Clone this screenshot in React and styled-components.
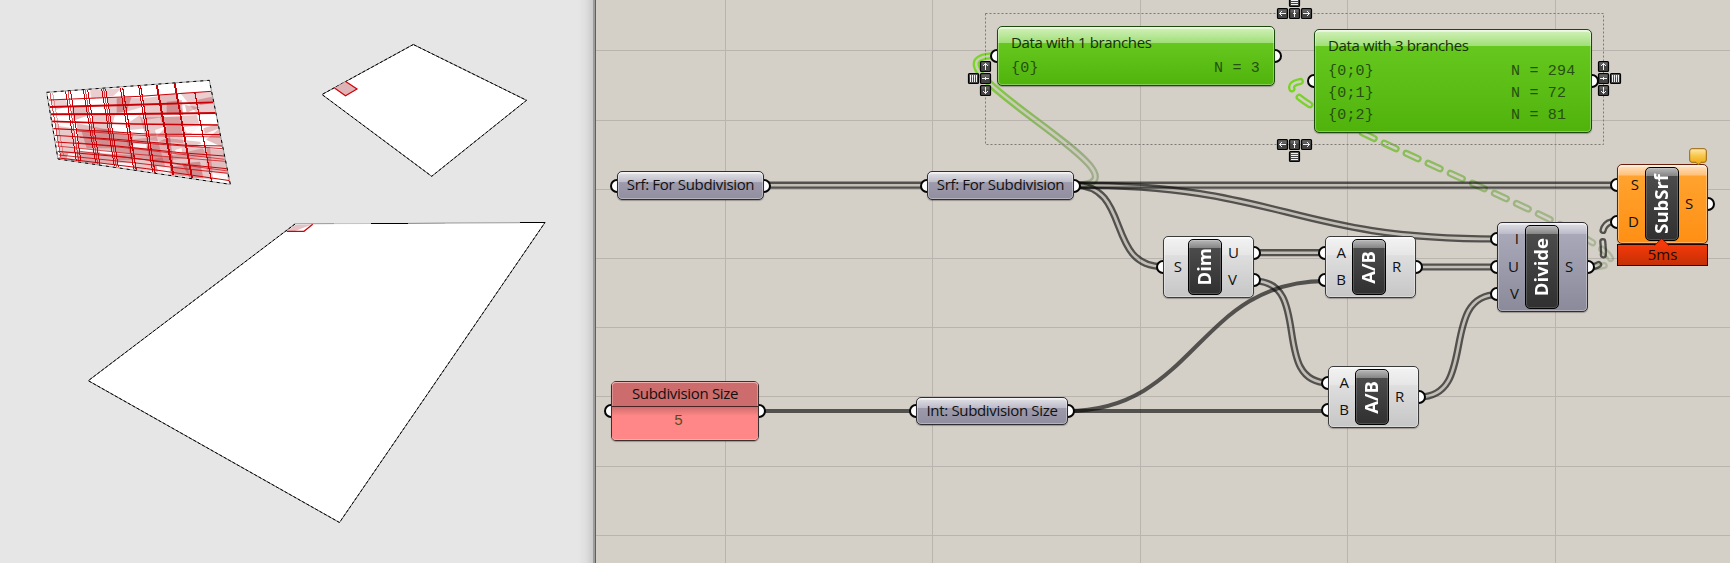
import React from "react";
import styled, { createGlobalStyle, css } from "styled-components";

const ORIGIN = 596;
const UI = `"Open Sans", "Noto Sans", sans-serif`;
const MONO = `"Liberation Mono", monospace`;

const GlobalStyle = createGlobalStyle`
  body { margin: 0; background: #d4cfc7; overflow: hidden; }
  *, *::before, *::after { box-sizing: border-box; }
`;

const Screen = styled.main`
  display: grid;
  grid-template-columns: ${ORIGIN}px 1fr;
  width: 1730px;
  height: 563px;
  overflow: hidden;
`;

const Viewport = styled.section`
  border-right: 1px solid #5f5f5f;
  box-shadow: inset -2px 0 0 #9d9d9d;
  background: linear-gradient(90deg, #e6e6e6 0, #e6e6e6 578px, #dedede 586px, #cacaca 593px);
`;

const Scene = styled.svg`
  display: block;
`;

const Canvas = styled.section`
  position: relative;
  isolation: isolate;
  overflow: hidden;
  background: #d4cfc7;
`;

const WireLayer = styled.svg`
  position: absolute;
  inset: 0;
  z-index: -2;
`;

const HandleLayer = styled.svg`
  position: absolute;
  inset: 0;
  pointer-events: none;
`;

const skins = {
  param: css`
    background: linear-gradient(#e3e3e8 0, #bcbbc8 38%, #9c9aab 39%, #918f9f 100%);
    --edge: #2e2e33;
  `,
  light: css`
    background: linear-gradient(#f3f3f3 0, #e6e6e6 30%, #dedede 31%, #c6c6c6 100%);
    --edge: #3b3b3b;
  `,
  selectedGrey: css`
    background: linear-gradient(#e0e0e6 0, #bdbcca 12%, #a9a8b8 13%, #8b8a9a 100%);
    --edge: #2e2e33;
  `,
  orange: css`
    background: linear-gradient(#ffe3c2 0, #ffc17a 13%, #ffa32e 14%, #ff8f14 100%);
    --edge: #6b1d0a;
  `,
  green: css`
    background: linear-gradient(#d3f2bd 0, #a0de76 var(--gloss), #66c81e var(--gloss), #50b30c 100%);
    --edge: #1c4a0c;
  `,
  red: css`
    background: #ff8787;
    --edge: #3d3030;
  `,
};

const Node = styled.article`
  position: absolute;
  left: ${(p) => p.$x - ORIGIN}px;
  top: ${(p) => p.$y}px;
  width: ${(p) => p.$w}px;
  height: ${(p) => p.$h}px;
  display: flex;
  font-family: ${UI};
  font-size: 15px;
  color: #111;
  border: 1px solid var(--edge);
  border-radius: 5px;
  box-shadow: inset 0 0 0 1px rgba(255, 255, 255, 0.32), inset 0 2px 0 rgba(255, 255, 255, 0.45),
    0 1px 1px rgba(0, 0, 0, 0.28);
  ${(p) => skins[p.$skin]}
`;

const Grip = styled.i`
  position: absolute;
  z-index: -1;
  top: calc(50% - 7px);
  ${(p) => p.$side}: -8px;
  width: 14px;
  height: 14px;
  border: 2.5px solid #050505;
  border-radius: 50%;
  background: #fff;
`;

const Caption = styled.span`
  margin: auto;
  padding-bottom: 3px;
  white-space: nowrap;
  line-height: 20px;
  letter-spacing: -0.33px;
`;

const PortColumn = styled.div`
  flex: ${(p) => (p.$w ? `0 0 ${p.$w}px` : "1")};
  display: flex;
  flex-direction: column;
  padding: 2px 0 3px;
`;

const Port = styled.div`
  position: relative;
  flex: 1;
  display: flex;
  align-items: center;
  justify-content: ${(p) => (p.$side === "left" ? "flex-end" : "flex-start")};
  padding: 0 6px 2px 6px;
`;

const Core = styled.div`
  width: 34px;
  margin: 2px 0;
  display: flex;
  align-items: center;
  justify-content: center;
  border: 1px solid #000;
  border-radius: 5px;
  box-shadow: inset 0 0 0 1px rgba(255, 255, 255, 0.16);
  background: linear-gradient(#b8b8b8 0, #858585 8px, #4b4b4b 8px, #303030 100%);
  color: #fff;
  font-weight: 700;
  font-size: 18.5px;
  line-height: 32px;
`;

const CoreText = styled.span`
  writing-mode: vertical-rl;
  rotate: 180deg;
  line-height: 28px;
  margin-right: 2px;
`;

const DataBody = styled.div`
  flex: 1;
  display: flex;
  flex-direction: column;
  padding: 5px 16px 0 13px;
  color: #15300a;
`;

const DataTitle = styled.h2`
  margin: 0 0 6px;
  font: 400 15px/20px ${UI};
  letter-spacing: -0.37px;
`;

const DataRow = styled.div`
  display: flex;
  justify-content: space-between;
  font: 15px/22.2px ${MONO};
  letter-spacing: 0.2px;
  color: #25500f;
`;

const DataCount = styled.span`
  width: ${(p) => p.$w}px;
  white-space: pre;
`;

const PanelBody = styled.div`
  flex: 1;
  display: flex;
  flex-direction: column;
  text-align: center;
`;

const PanelTitle = styled.div`
  height: 25px;
  border-bottom: 1px solid #4a2424;
  border-radius: 4px 4px 0 0;
  background: #cd6c6c;
  box-shadow: inset 0 1px 0 #f0b0b0, inset 1px 0 0 #dd9090, inset -1px 0 0 #dd9090;
  line-height: 22px;
  letter-spacing: -0.33px;
`;

const PanelValue = styled.div`
  flex: 1;
  padding-right: 13px;
  border-radius: 0 0 4px 4px;
  background: linear-gradient(#cf6e6e 0, #ff8787 9px);
  box-shadow: inset 0 -1px 0 #ffa5a5;
  font: 15px/30px ${MONO};
  color: #5a4a1c;
`;

const Timer = styled.div`
  position: absolute;
  left: ${(p) => p.$x - ORIGIN}px;
  top: ${(p) => p.$y}px;
  width: 91px;
  height: 22px;
  border: 1px solid #1a0500;
  background: linear-gradient(#f5390a, #c42f06);
  font: 15px/19px ${UI};
  text-align: center;
  color: #210800;
`;

const Overlay = styled.svg`
  position: absolute;
  overflow: visible;
  left: ${(p) => p.$x - ORIGIN}px;
  top: ${(p) => p.$y}px;
`;

function Param({ label, ...box }) {
  return (
    <Node $skin="param" {...box}>
      <Grip $side="left" />
      <Caption>{label}</Caption>
      <Grip $side="right" />
    </Node>
  );
}

function Ports({ side, names, width }) {
  return (
    <PortColumn $w={width}>
      {names.map((n) => (
        <Port key={n} $side={side}>
          <Grip $side={side} />
          {n}
        </Port>
      ))}
    </PortColumn>
  );
}

function Component({ skin, ins, outs, name, inWidth, ...box }) {
  return (
    <Node $skin={skin} {...box}>
      <Ports side="left" names={ins} width={inWidth} />
      <Core>
        <CoreText>{name}</CoreText>
      </Core>
      <Ports side="right" names={outs} />
    </Node>
  );
}

const GreenNode = styled(Node)`
  --gloss: ${(p) => p.$gloss};
`;

function DataPanel({ title, rows, gloss, countWidth, ...box }) {
  return (
    <GreenNode $skin="green" $gloss={gloss} {...box}>
      <Grip $side="left" />
      <DataBody>
        <DataTitle>{title}</DataTitle>
        {rows.map(([path, count]) => (
          <DataRow key={path}>
            <span>{path}</span>
            <DataCount $w={countWidth}>{`N = ${count}`}</DataCount>
          </DataRow>
        ))}
      </DataBody>
      <Grip $side="right" />
    </GreenNode>
  );
}

const bez = (x1, y1, x2, y2, d) => `M${x1} ${y1}C${x1 + d} ${y1} ${x2 - d} ${y2} ${x2} ${y2}`;

const doubleWires = [
  "M764 185.2H928",
  "M1074 185.2H1618",
  bez(1074, 185.2, 1498, 239, 212),
  bez(1074, 185.2, 1163, 266.7, 58),
  "M1254 252.7H1326",
  bez(1254, 281, 1329, 383, 60),
  "M1416 267H1498",
  bez(1419, 397, 1498, 294.5, 60),
];
const singleWires = ["M759 411H917", "M1067 411H1329", bez(1067, 411, 1326, 281, 129)];

function LinkWire({ id, d, stroke, dash, offset }) {
  const dashes = { strokeDasharray: dash, strokeDashoffset: offset, strokeLinecap: dash ? "round" : "butt" };
  return (
    <>
      <mask id={id} maskUnits="userSpaceOnUse" x="596" y="0" width="1134" height="563">
        <path d={d} stroke="#fff" strokeWidth="7.2" fill="none" {...dashes} />
        <path d={d} stroke={dash ? "#000" : "#222"} strokeWidth="2.6" fill="none" {...dashes} />
      </mask>
      <path d={d} stroke={stroke} strokeWidth="9" fill="none" mask={`url(#${id})`} strokeLinecap="round" />
    </>
  );
}

function Wires() {
  return (
    <WireLayer width="1134" height="563" viewBox="596 0 1134 563">
      <defs>
        <linearGradient id="fade1" gradientUnits="userSpaceOnUse" x1="990" y1="60" x2="1080" y2="180">
          <stop offset="0" stopColor="#7cd42b" />
          <stop offset="1" stopColor="#6b8a50" stopOpacity=".5" />
        </linearGradient>
        <linearGradient id="fade2" gradientUnits="userSpaceOnUse" x1="1300" y1="80" x2="1600" y2="265">
          <stop offset="0" stopColor="#78d424" />
          <stop offset="1" stopColor="#6b8a50" stopOpacity=".36" />
        </linearGradient>
      </defs>
      <g stroke="#b9b5ae">
        {[725.5, 932.5, 1140.5, 1347.5, 1555.5].map((x) => (
          <path key={x} d={`M${x} 0V563`} />
        ))}
        {[50.5, 120.5, 189.5, 258.5, 327.5, 396.5, 466.5, 535.5].map((y) => (
          <path key={y} d={`M596 ${y}H1730`} />
        ))}
      </g>
      <LinkWire id="g1" d={bez(997.5, 55.5, 1074, 185.2, -97)} stroke="url(#fade1)" />
      <LinkWire id="g2" d={bez(1314.5, 80.5, 1588, 267, -140)} stroke="url(#fade2)" dash="13 11.2" offset="10" />
      {doubleWires.map((d, i) => (
        <LinkWire key={d} id={`w${i}`} d={d} stroke="rgba(10,10,10,.64)" />
      ))}
      <LinkWire id="w20" d={bez(1588, 267, 1618, 221, 34)} stroke="rgba(10,10,10,.64)" dash="13 11.2" offset="2" />
      {singleWires.map((d) => (
        <path key={d} d={d} stroke="rgba(10,10,10,.64)" strokeWidth="4" fill="none" />
      ))}
    </WireLayer>
  );
}

const glyphs = {
  up: "M0 3.5V-3M-2.5 -.5L0 -3L2.5 -.5",
  down: "M0 -3.5V3M-2.5 .5L0 3L2.5 .5",
  left: "M3.5 0H-3M-.5 -2.5L-3 0L-.5 2.5",
  right: "M-3.5 0H3M.5 -2.5L3 0L.5 2.5",
  vbar: "M0 -3.5V3.5M-1.5 0H1.5",
  hbar: "M-3.5 0H3.5M0 -1.5V1.5",
  rows: "M-3.5 -3H3.5M-3.5 -1H3.5M-3.5 1H3.5M-3.5 3H3.5",
  cols: "M-3 -3.5V3.5M-1 -3.5V3.5M1 -3.5V3.5M3 -3.5V3.5",
};

const handles = [
  ["rows", 1294.5, 1.5], ["left", 1282.5, 13.5], ["vbar", 1294.5, 13.5], ["right", 1306.5, 13.5],
  ["left", 1282.5, 144.5], ["vbar", 1294.5, 144.5], ["right", 1306.5, 144.5], ["rows", 1294.5, 156.5],
  ["up", 985.5, 66.5], ["hbar", 985.5, 78.5], ["down", 985.5, 90.5], ["cols", 973.5, 78.5],
  ["up", 1603.5, 66.5], ["hbar", 1603.5, 78.5], ["down", 1603.5, 90.5], ["cols", 1615.5, 78.5],
];

function Handles() {
  return (
    <HandleLayer width="1134" height="563" viewBox="596 0 1134 563">
      <rect x="985.5" y="13.5" width="618" height="131" fill="none" stroke="#7d7973" strokeDasharray="2 2" />
      {handles.map(([kind, x, y]) => (
        <g key={`${x}-${y}`} transform={`translate(${x} ${y})`}>
          <rect x="-5" y="-5" width="10" height="10" rx="1" fill="#444" stroke="#050505" strokeWidth="1.2" />
          <rect x="-4" y="-4" width="8" height="3" fill="#fff" opacity=".16" />
          <path d={glyphs[kind]} fill="none" stroke="#fff" strokeWidth="1" opacity=".92" />
        </g>
      ))}
    </HandleLayer>
  );
}

/* Mesh drawing uses a 3x coordinate space. */
const meshColumns = [
  [150, 220, 182, 412, 2], [158, 219, 190, 405, 1],
  [197, 214, 229, 422, 3], [204, 214, 236, 423, 2], [212, 214, 243, 424, 3],
  [250, 210, 287, 430, 3], [256, 210, 293, 432, 2], [263, 209, 300, 435, 3],
  [305, 207, 343, 438, 3], [311, 207, 349, 440, 2], [317, 207, 355, 440, 3],
  [361, 203, 401, 446, 3], [368, 203, 409, 450, 3.5],
  [416, 199, 458, 455, 3], [422, 199, 465, 458, 3.5],
  [470, 194, 520, 466, 6], [524, 190, 576, 474, 5.5], [585, 220, 634, 482, 3.5],
];
const meshRows = [
  ["147,240 290,234 420,229 634,214", 3], ["148,261 380,255 640,247", 5.5], ["151,283 400,282 646,279", 6],
  ["155,304 400,312 655,315", 5], ["160,326 300,333 440,342 662,344", 3.5], ["230,333 440,347 662,351", 2],
  ["164,346 350,358 560,376 668,378", 3], ["240,352 440,370 668,386", 2.5], ["168,366 350,378 540,398 672,408", 3],
  ["230,368 420,388 674,418", 2], ["172,378 400,402 676,424", 2], ["173,394 380,412 560,434 680,446", 3],
  ["240,394 440,420 684,453", 2], ["176,405 400,428 560,447 686,460", 2.5], ["176,414 440,446 690,482", 3],
];
const patches = [
  ["150,240 196,236 204,258 168,270", .2], ["270,210 365,205 340,228 275,236", .22], ["215,262 262,258 270,284 220,302", .3],
  ["320,232 420,235 430,285 330,280", .25], ["350,235 395,230 380,275 350,278", .35], ["430,235 480,228 486,292 436,300", .24],
  ["420,290 540,290 550,370 440,360", .25], ["480,226 530,220 550,285 480,285", .3], ["500,245 545,240 550,285 500,280", .3],
  ["540,218 640,216 646,280 590,280", .22], ["590,240 635,230 640,248 600,256", .3], ["555,255 600,262 560,278", .3],
  ["480,292 590,285 600,318 570,345 500,350", .25], ["610,325 658,310 668,382 620,360", .3], ["165,310 220,325 240,400 180,395", .24],
  ["230,310 330,330 400,345 390,400 235,385", .3], ["245,335 330,325 340,385 260,385", .3], ["280,285 345,285 330,340 270,325", .25],
  ["330,340 440,345 450,420 350,420", .25], ["380,360 470,350 500,455 400,450", .25], ["440,380 510,350 520,430 450,425", .35],
  ["180,395 300,395 300,435 180,415", .4], ["300,400 400,405 390,440 300,430", .35], ["450,420 630,380 640,480 460,455", .25],
  ["500,355 600,365 620,410 510,420", .25], ["545,430 600,425 610,475 570,475", .35], ["620,385 670,390 690,490 620,450", .3],
  ["375,315 420,285 440,325 390,330", .25], ["500,440 560,435 570,470 510,465", .3],
];
const glints = [
  "180,305 225,308 220,325 175,318", "280,238 320,236 325,255 285,255", "345,285 425,262 430,278 390,300",
  "550,322 600,316 600,340 560,338", "395,370 440,372 440,385 400,382", "350,428 400,428 400,442 358,442",
  "525,390 545,384 546,398 530,400", "605,345 660,324 620,358", "636,456 680,462 686,488 640,480",
  "465,330 500,318 470,350", "590,375 612,368 614,385", "205,400 230,400 230,418 200,414", "470,438 510,440 512,462 474,456",
];

const surfaceEdges = ["M413.3 44.5L322 94.5L431.7 176.3L526.5 100.3Z", "M295 224L88.3 380.7L339.5 522.5L545 222.5"];

function Geometry() {
  return (
    <Scene width="593" height="563" viewBox="0 0 593 563">
      <defs>
        <clipPath id="mesh"><path d="M140 217L628 181L691 493L174 417Z" /></clipPath>
      </defs>
      <g transform="translate(0 20) scale(.33333)">
        <path d="M140 217L628 181L691 493L174 417Z" fill="#fff" />
        <g clipPath="url(#mesh)">
          {patches.map(([p, o]) => (
            <polygon key={p} points={p} fill="#a32024" opacity={o} />
          ))}
          {glints.map((p) => (
            <polygon key={p} points={p} fill="#fff" opacity=".85" />
          ))}
          <g stroke="#cb0006" fill="none" shapeRendering="crispEdges">
            {meshColumns.map(([x1, y1, x2, y2, w]) => (
              <path key={x1} d={`M${x1} ${y1}L${x2} ${y2}`} strokeWidth={w} />
            ))}
          </g>
          <g stroke="#cb0006" fill="none">
            {meshRows.map(([p, w]) => (
              <polyline key={p} points={p} strokeWidth={w} />
            ))}
          </g>
        </g>
        <path d="M140 217L628 181L691 493L174 417Z" fill="none" stroke="#999" strokeWidth="3" />
        <path d="M140 217L628 181L691 493L174 417Z" fill="none" stroke="#000" strokeWidth="3" strokeDasharray="9 12" />
      </g>
      {surfaceEdges.map((d) => (
        <g key={d}>
          <path d={d} fill="#fff" stroke="#6a6a6a" />
          <path d={d} fill="none" stroke="#000" strokeDasharray="3 2" />
        </g>
      ))}
      <path d="M334.5 88L345.7 81.5L357.5 89L345.5 96Z" fill="#deb4b6" />
      <path d="M334.5 88L345.5 95.8L357 89L345.7 81.5" fill="none" stroke="#d00008" strokeWidth="1.2" />
      <g strokeWidth="1">
        <path d="M295 223.8L334 223.6" stroke="#999" />
        <path d="M334 223.6L371 223.5" stroke="#c4c4c4" />
        <path d="M371 223.5H408" stroke="#000" />
        <path d="M408 223.4L445 223.1" stroke="#888" />
        <path d="M445 223L520 222.7" stroke="#999" />
        <path d="M520 222.5H545" stroke="#000" />
      </g>
      <path d="M287 231L295 225L312 224.5L295 231Z" fill="#e5c2c4" />
      <path d="M286.7 231.3H304L312.7 224.3" fill="none" stroke="#d00008" strokeWidth="1.2" />
    </Scene>
  );
}

export default function App() {
  return (
    <Screen>
      <GlobalStyle />
      <Viewport>
        <Geometry />
      </Viewport>
      <Canvas>
        <Wires />
        <DataPanel $x={997} $y={26} $w={278} $h={60} gloss="28%" countWidth={44} title="Data with 1 branches" rows={[["{0}", 3]]} />
        <DataPanel
          $x={1314} $y={29} $w={278} $h={104} gloss="16%" countWidth={64}
          title="Data with 3 branches" rows={[["{0;0}", 294], ["{0;1}", 72], ["{0;2}", 81]]}
        />
        <Param $x={617} $y={171} $w={147} $h={29} label="Srf: For Subdivision" />
        <Param $x={927} $y={171} $w={147} $h={29} label="Srf: For Subdivision" />
        <Param $x={916} $y={397} $w={152} $h={28} label="Int: Subdivision Size" />
        <Node $skin="red" $x={611} $y={381} $w={148} $h={60}>
          <Grip $side="left" />
          <PanelBody>
            <PanelTitle>Subdivision Size</PanelTitle>
            <PanelValue>5</PanelValue>
          </PanelBody>
          <Grip $side="right" />
        </Node>
        <Component skin="light" $x={1163} $y={236} $w={91} $h={62} inWidth={24} ins={["S"]} outs={["U", "V"]} name="Dim" />
        <Component skin="light" $x={1325} $y={236} $w={91} $h={62} inWidth={26} ins={["A", "B"]} outs={["R"]} name="A/B" />
        <Component skin="light" $x={1328} $y={366} $w={91} $h={62} inWidth={26} ins={["A", "B"]} outs={["R"]} name="A/B" />
        <Component skin="selectedGrey" $x={1497} $y={222} $w={91} $h={90} inWidth={27} ins={["I", "U", "V"]} outs={["S"]} name="Divide" />
        <Component skin="orange" $x={1617} $y={164} $w={91} $h={80} inWidth={27} ins={["S", "D"]} outs={["S"]} name="SubSrf" />
        <Timer $x={1617} $y={244}>5ms</Timer>
        <Overlay $x={1654} $y={238} width="16" height="8">
          <path d="M0.5 7.5L7.7 0.5L15 7.5" fill="#f5390a" stroke="#5a1000" strokeWidth=".8" />
        </Overlay>
        <Overlay $x={1689} $y={148} width="18" height="18">
          <defs>
            <linearGradient id="note" x2="0" y2="1">
              <stop offset="0" stopColor="#ffe9a8" />
              <stop offset=".45" stopColor="#f7c64a" />
              <stop offset="1" stopColor="#f0a400" />
            </linearGradient>
          </defs>
          <path
            d="M3 .7H15Q17.3 .7 17.3 3V12Q17.3 14.3 15 14.3H12L9.5 17L7 14.3H3Q.7 14.3 .7 12V3Q.7 .7 3 .7Z"
            fill="url(#note)" stroke="#9a6408"
          />
        </Overlay>
        <Handles />
      </Canvas>
    </Screen>
  );
}
